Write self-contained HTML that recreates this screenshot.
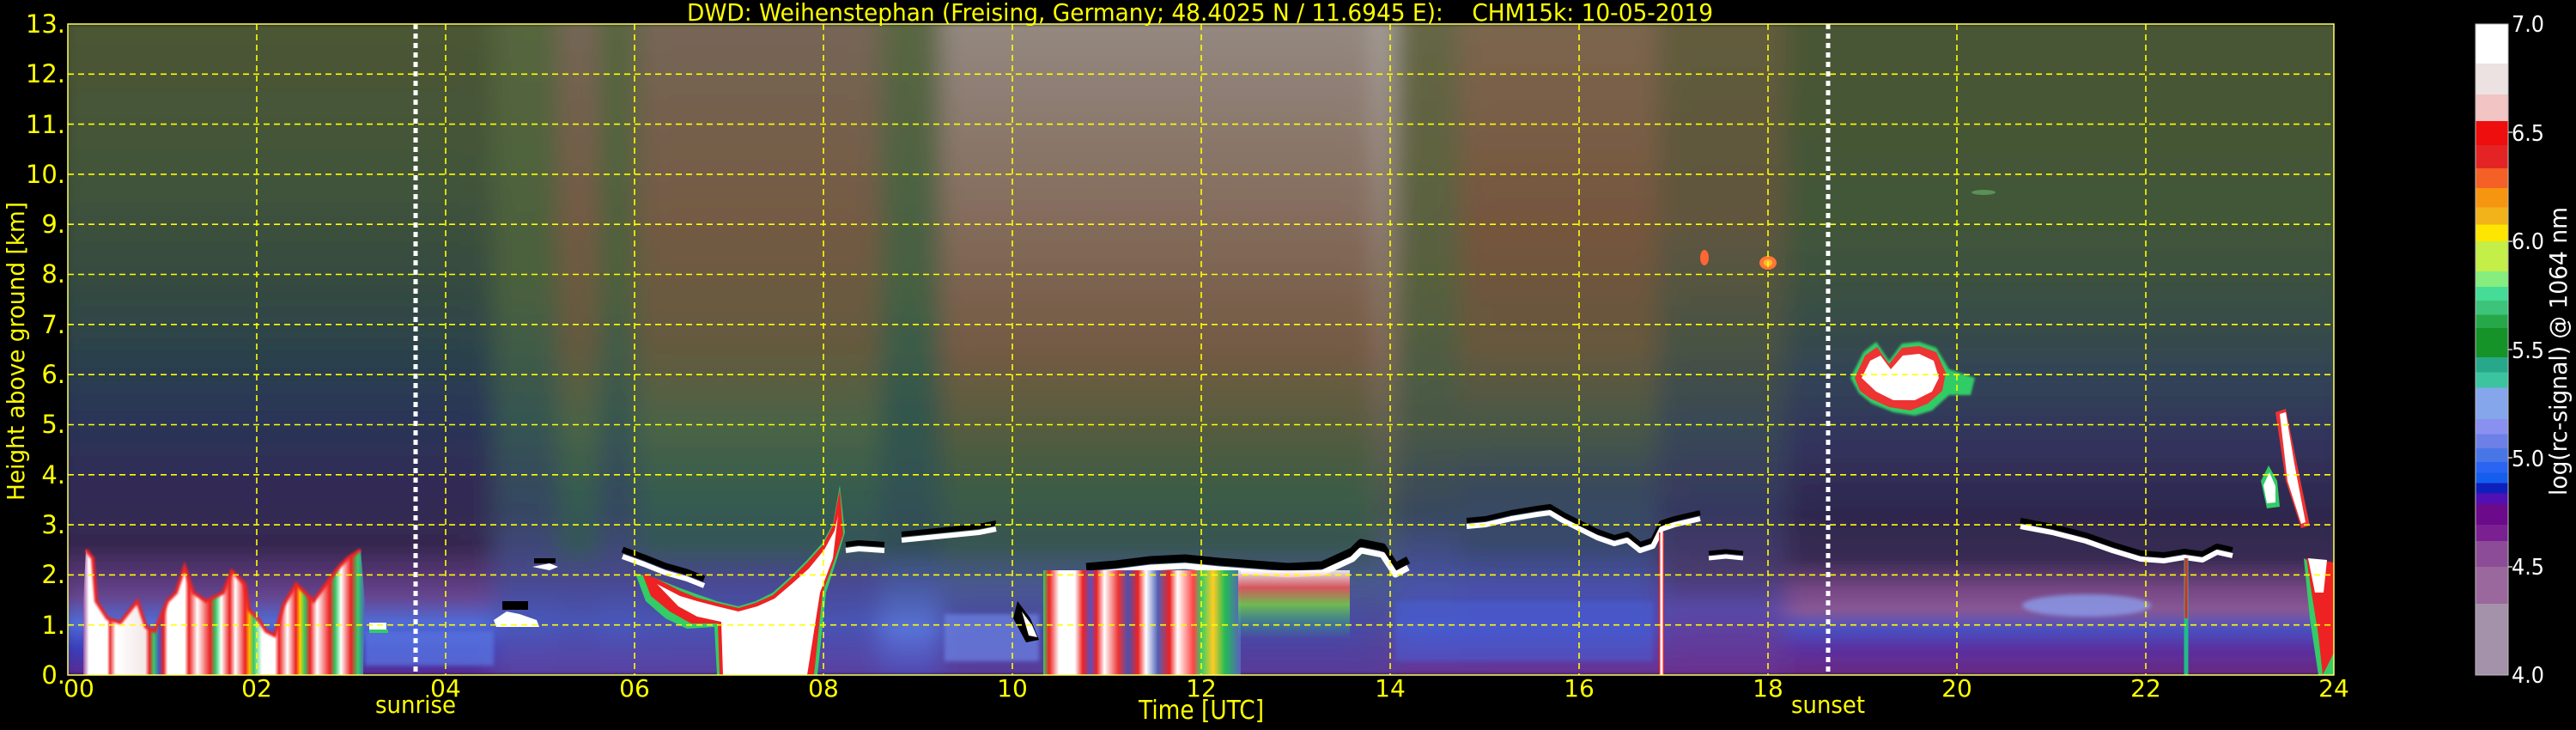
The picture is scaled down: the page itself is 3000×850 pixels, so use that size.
<!DOCTYPE html>
<html><head><meta charset="utf-8"><style>
html,body{margin:0;padding:0;background:#000;width:3000px;height:850px;overflow:hidden}
svg{display:block}
text{font-family:"DejaVu Sans","Liberation Sans",sans-serif}
</style></head><body>
<svg width="3000" height="850" viewBox="0 0 3000 850" xmlns="http://www.w3.org/2000/svg">
<defs>
<clipPath id="pc"><rect x="79" y="28" width="2639" height="758"/></clipPath>
<filter id="hb" x="-5%" y="0" width="110%" height="100%"><feGaussianBlur stdDeviation="14 2" edgeMode="duplicate"/></filter>
<filter id="sb"><feGaussianBlur stdDeviation="2.5"/></filter>
<filter id="sb1"><feGaussianBlur stdDeviation="1.2"/></filter>
<linearGradient id="gA" x1="0" y1="0" x2="0" y2="1">
<stop offset="0" stop-color="#4c5634"/><stop offset="0.23" stop-color="#42543a"/><stop offset="0.385" stop-color="#364c40"/><stop offset="0.5" stop-color="#2c424a"/><stop offset="0.6" stop-color="#2a3658"/><stop offset="0.7" stop-color="#302c56"/><stop offset="0.8" stop-color="#362850"/><stop offset="0.846" stop-color="#563674"/><stop offset="0.88" stop-color="#664690"/><stop offset="0.92" stop-color="#506cd8"/><stop offset="0.96" stop-color="#3a3ebc"/><stop offset="1" stop-color="#5a2a90"/></linearGradient>
<linearGradient id="gB1" x1="0" y1="0" x2="0" y2="1">
<stop offset="0" stop-color="#56663e"/><stop offset="0.4" stop-color="#4a603e"/><stop offset="0.6" stop-color="#365650"/><stop offset="0.75" stop-color="#364662"/><stop offset="0.85" stop-color="#48488e"/><stop offset="0.92" stop-color="#4858bc"/><stop offset="1" stop-color="#5a40a0"/></linearGradient>
<linearGradient id="gB" x1="0" y1="0" x2="0" y2="1">
<stop offset="0" stop-color="#766656"/><stop offset="0.3" stop-color="#745a44"/><stop offset="0.5" stop-color="#645a3e"/><stop offset="0.62" stop-color="#4a6446"/><stop offset="0.72" stop-color="#365c4e"/><stop offset="0.8" stop-color="#365658"/><stop offset="0.85" stop-color="#48488e"/><stop offset="0.92" stop-color="#4854b4"/><stop offset="1" stop-color="#5a40a0"/></linearGradient>
<linearGradient id="gC" x1="0" y1="0" x2="0" y2="1">
<stop offset="0" stop-color="#5a6642"/><stop offset="0.4" stop-color="#466042"/><stop offset="0.6" stop-color="#32564c"/><stop offset="0.8" stop-color="#324e58"/><stop offset="0.86" stop-color="#4858a0"/><stop offset="0.93" stop-color="#5872d6"/><stop offset="1" stop-color="#5048b0"/></linearGradient>
<linearGradient id="gD" x1="0" y1="0" x2="0" y2="1">
<stop offset="0" stop-color="#948880"/><stop offset="0.3" stop-color="#846c5c"/><stop offset="0.5" stop-color="#745a44"/><stop offset="0.62" stop-color="#565c3e"/><stop offset="0.72" stop-color="#3c5c46"/><stop offset="0.8" stop-color="#385652"/><stop offset="0.86" stop-color="#48588e"/><stop offset="0.93" stop-color="#4848a6"/><stop offset="1" stop-color="#5a3a98"/></linearGradient>
<linearGradient id="gW" x1="0" y1="0" x2="0" y2="1">
<stop offset="0" stop-color="#aaa29e"/><stop offset="0.5" stop-color="#846c5c"/><stop offset="0.75" stop-color="#48584e"/><stop offset="0.86" stop-color="#48588e"/><stop offset="1" stop-color="#5a3a98"/></linearGradient>
<linearGradient id="gE1" x1="0" y1="0" x2="0" y2="1">
<stop offset="0" stop-color="#666644"/><stop offset="0.4" stop-color="#56603e"/><stop offset="0.62" stop-color="#485846"/><stop offset="0.75" stop-color="#38485e"/><stop offset="0.86" stop-color="#4852a6"/><stop offset="0.93" stop-color="#4854c2"/><stop offset="1" stop-color="#6a3090"/></linearGradient>
<linearGradient id="gE" x1="0" y1="0" x2="0" y2="1">
<stop offset="0" stop-color="#7c664e"/><stop offset="0.3" stop-color="#76563e"/><stop offset="0.5" stop-color="#66583e"/><stop offset="0.62" stop-color="#485846"/><stop offset="0.72" stop-color="#38485e"/><stop offset="0.8" stop-color="#38486e"/><stop offset="0.86" stop-color="#4850a6"/><stop offset="0.93" stop-color="#4850c2"/><stop offset="1" stop-color="#6a3090"/></linearGradient>
<linearGradient id="gE2" x1="0" y1="0" x2="0" y2="1">
<stop offset="0" stop-color="#625c3e"/><stop offset="0.3" stop-color="#60563e"/><stop offset="0.5" stop-color="#485244"/><stop offset="0.62" stop-color="#384856"/><stop offset="0.75" stop-color="#363860"/><stop offset="0.84" stop-color="#483a6e"/><stop offset="0.9" stop-color="#5848a6"/><stop offset="1" stop-color="#6a3090"/></linearGradient>
<linearGradient id="gF" x1="0" y1="0" x2="0" y2="1">
<stop offset="0" stop-color="#4a5634"/><stop offset="0.3" stop-color="#425638"/><stop offset="0.45" stop-color="#384e46"/><stop offset="0.55" stop-color="#324258"/><stop offset="0.65" stop-color="#32325c"/><stop offset="0.75" stop-color="#2e284e"/><stop offset="0.82" stop-color="#382a52"/><stop offset="0.87" stop-color="#784886"/><stop offset="0.9" stop-color="#885896"/><stop offset="0.93" stop-color="#4a50c0"/><stop offset="0.96" stop-color="#5a30a0"/><stop offset="1" stop-color="#6a2a80"/></linearGradient>
<linearGradient id="gL" gradientUnits="userSpaceOnUse" x1="97" y1="0" x2="425" y2="0">
<stop offset="0" stop-color="#9a50a0"/><stop offset="0.02" stop-color="#fff"/><stop offset="0.085" stop-color="#fff"/><stop offset="0.095" stop-color="#e33"/><stop offset="0.115" stop-color="#fff"/><stop offset="0.22" stop-color="#f4e8e8"/><stop offset="0.235" stop-color="#e22"/><stop offset="0.25" stop-color="#3c6"/><stop offset="0.27" stop-color="#5050c0"/><stop offset="0.285" stop-color="#e22"/><stop offset="0.3" stop-color="#fff"/><stop offset="0.36" stop-color="#fff"/><stop offset="0.375" stop-color="#e22"/><stop offset="0.405" stop-color="#fff"/><stop offset="0.45" stop-color="#e22"/><stop offset="0.47" stop-color="#3c6"/><stop offset="0.49" stop-color="#fff"/><stop offset="0.52" stop-color="#e22"/><stop offset="0.54" stop-color="#fff"/><stop offset="0.575" stop-color="#e22"/><stop offset="0.59" stop-color="#fb0"/><stop offset="0.605" stop-color="#3c6"/><stop offset="0.635" stop-color="#fff"/><stop offset="0.68" stop-color="#fff"/><stop offset="0.695" stop-color="#e22"/><stop offset="0.725" stop-color="#fff"/><stop offset="0.755" stop-color="#e22"/><stop offset="0.77" stop-color="#fc0"/><stop offset="0.785" stop-color="#3c6"/><stop offset="0.805" stop-color="#e22"/><stop offset="0.83" stop-color="#fff"/><stop offset="0.875" stop-color="#e22"/><stop offset="0.895" stop-color="#3c6"/><stop offset="0.915" stop-color="#fff"/><stop offset="0.95" stop-color="#e22"/><stop offset="0.975" stop-color="#3c6"/><stop offset="1" stop-color="#5060c0"/></linearGradient>
<linearGradient id="gM" gradientUnits="userSpaceOnUse" x1="1215" y1="0" x2="1445" y2="0">
<stop offset="0" stop-color="#3c6"/><stop offset="0.03" stop-color="#e22"/><stop offset="0.08" stop-color="#fff"/><stop offset="0.16" stop-color="#fff"/><stop offset="0.2" stop-color="#e22"/><stop offset="0.24" stop-color="#5a50c0"/><stop offset="0.27" stop-color="#e22"/><stop offset="0.31" stop-color="#fff"/><stop offset="0.38" stop-color="#e33"/><stop offset="0.43" stop-color="#4a50b0"/><stop offset="0.48" stop-color="#e22"/><stop offset="0.52" stop-color="#fff"/><stop offset="0.58" stop-color="#5060b8"/><stop offset="0.64" stop-color="#e22"/><stop offset="0.68" stop-color="#fff"/><stop offset="0.76" stop-color="#f44"/><stop offset="0.8" stop-color="#3c6"/><stop offset="0.86" stop-color="#fc2"/><stop offset="0.92" stop-color="#2b5"/><stop offset="1" stop-color="#5a60c0"/></linearGradient>
<linearGradient id="gTop" x1="0" y1="0" x2="0" y2="1">
<stop offset="0" stop-color="#fff"/><stop offset="0.25" stop-color="#e55"/><stop offset="0.5" stop-color="#7c4"/><stop offset="0.8" stop-color="#3a8" stop-opacity="0.5"/><stop offset="1" stop-color="#3a8" stop-opacity="0"/></linearGradient>
<linearGradient id="cb" x1="0" y1="0" x2="0" y2="1">
<stop offset="0" stop-color="#ffffff"/><stop offset="0.0608" stop-color="#ffffff"/>
<stop offset="0.0608" stop-color="#ece2e2"/><stop offset="0.108" stop-color="#ece2e2"/>
<stop offset="0.108" stop-color="#f2c4c4"/><stop offset="0.1488" stop-color="#f2c4c4"/>
<stop offset="0.1488" stop-color="#ee0e0e"/><stop offset="0.186" stop-color="#ee0e0e"/>
<stop offset="0.186" stop-color="#e42424"/><stop offset="0.2217" stop-color="#e42424"/>
<stop offset="0.2217" stop-color="#f46026"/><stop offset="0.2518" stop-color="#f46026"/>
<stop offset="0.2518" stop-color="#f69610"/><stop offset="0.2818" stop-color="#f69610"/>
<stop offset="0.2818" stop-color="#f2b21a"/><stop offset="0.3083" stop-color="#f2b21a"/>
<stop offset="0.3083" stop-color="#fee600"/><stop offset="0.334" stop-color="#fee600"/>
<stop offset="0.334" stop-color="#c4ee48"/><stop offset="0.3798" stop-color="#c4ee48"/>
<stop offset="0.3798" stop-color="#86ee7e"/><stop offset="0.4034" stop-color="#86ee7e"/>
<stop offset="0.4034" stop-color="#44dc96"/><stop offset="0.4249" stop-color="#44dc96"/>
<stop offset="0.4249" stop-color="#3ec47a"/><stop offset="0.4464" stop-color="#3ec47a"/>
<stop offset="0.4464" stop-color="#26a84a"/><stop offset="0.4671" stop-color="#26a84a"/>
<stop offset="0.4671" stop-color="#159228"/><stop offset="0.5122" stop-color="#159228"/>
<stop offset="0.5122" stop-color="#28a88a"/><stop offset="0.535" stop-color="#28a88a"/>
<stop offset="0.535" stop-color="#3cc4a0"/><stop offset="0.5587" stop-color="#3cc4a0"/>
<stop offset="0.5587" stop-color="#86a6ec"/><stop offset="0.6066" stop-color="#86a6ec"/>
<stop offset="0.6066" stop-color="#8a90f0"/><stop offset="0.6302" stop-color="#8a90f0"/>
<stop offset="0.6302" stop-color="#6c80e8"/><stop offset="0.6516" stop-color="#6c80e8"/>
<stop offset="0.6516" stop-color="#4876e6"/><stop offset="0.6731" stop-color="#4876e6"/>
<stop offset="0.6731" stop-color="#2a64f2"/><stop offset="0.6896" stop-color="#2a64f2"/>
<stop offset="0.6896" stop-color="#145eee"/><stop offset="0.7053" stop-color="#145eee"/>
<stop offset="0.7053" stop-color="#0e20bc"/><stop offset="0.721" stop-color="#0e20bc"/>
<stop offset="0.721" stop-color="#5010b4"/><stop offset="0.7368" stop-color="#5010b4"/>
<stop offset="0.7368" stop-color="#6c0a8c"/><stop offset="0.769" stop-color="#6c0a8c"/>
<stop offset="0.769" stop-color="#7a2090"/><stop offset="0.794" stop-color="#7a2090"/>
<stop offset="0.794" stop-color="#8c4c98"/><stop offset="0.834" stop-color="#8c4c98"/>
<stop offset="0.834" stop-color="#9a689c"/><stop offset="0.8906" stop-color="#9a689c"/>
<stop offset="0.8906" stop-color="#a492aa"/><stop offset="1" stop-color="#a492aa"/>
</linearGradient>
</defs>

<g clip-path="url(#pc)">
<g filter="url(#hb)">
<rect x="60" y="28" width="516" height="758" fill="url(#gA)"/>
<rect x="574" y="28" width="78" height="758" fill="url(#gB1)"/>
<rect x="650" y="28" width="50" height="758" fill="url(#gB)"/>
<rect x="698" y="28" width="45" height="758" fill="url(#gB1)"/>
<rect x="741" y="28" width="286" height="758" fill="url(#gB)"/>
<rect x="1025" y="28" width="72" height="758" fill="url(#gC)"/>
<rect x="1095" y="28" width="507" height="758" fill="url(#gD)"/>
<rect x="1600" y="28" width="25" height="758" fill="url(#gW)"/>
<rect x="1625" y="28" width="77" height="758" fill="url(#gE1)"/>
<rect x="1700" y="28" width="232" height="758" fill="url(#gE)"/>
<rect x="1930" y="28" width="152" height="758" fill="url(#gE2)"/>
<rect x="2080" y="28" width="660" height="758" fill="url(#gF)"/>
</g>
<g filter="url(#sb)" opacity="0.75">
<rect x="425" y="735" width="150" height="40" fill="#5a74e0"/>
<rect x="1100" y="715" width="110" height="55" fill="#6a80e0"/>
<ellipse cx="2430" cy="705" rx="75" ry="13" fill="#8aa0f0"/>
<rect x="1625" y="700" width="300" height="70" fill="#4a62d8" opacity="0.6"/>
</g>

<path d="M97,786 L97,700 L100,640 L108,650 L112,700 L125,720 L140,725 L160,700 L170,730 L180,735 L195,700 L205,690 L215,660 L225,690 L240,700 L260,690 L270,665 L285,680 L290,710 L300,720 L310,735 L320,740 L330,705 L345,680 L355,690 L365,700 L380,680 L395,660 L405,650 L420,640 L425,700 L423,786 Z" fill="url(#gL)"/>
<path d="M100,640 L108,650 L112,700 L125,720 L140,725 L160,700 L170,730 L180,735 L195,700 L205,690 L215,660 L225,690 L240,700 L260,690 L270,665 L285,680 L290,710 L300,720 L310,735 L320,740 L330,705 L345,680 L355,690 L365,700 L380,680 L395,660 L405,650 L420,640" fill="none" stroke="#e22" stroke-width="4" filter="url(#sb1)"/>
<g>
<rect x="430" y="725" width="20" height="8" fill="#fff"/><rect x="430" y="733" width="22" height="4" fill="#3c6"/>
<path d="M575,722 L590,712 L605,715 L625,722 L628,730 L578,730 Z" fill="#fff"/>
<rect x="585" y="700" width="30" height="10" fill="#000"/>
<path d="M620,660 L640,656 L650,660 L640,664 Z" fill="#fff"/><rect x="622" y="650" width="25" height="6" fill="#000"/>
</g>

<path d="M740,668 L760,672 L790,684 L812,692 L835,700 L860,706 L880,700 L900,690 L920,672 L940,652 L958,632 L970,610 L978,565 L984,620 L975,650 L962,690 L952,786 L835,786 L832,730 L800,732 L775,720 L752,700 Z" fill="#3c6"/>
<path d="M748,668 L765,674 L792,688 L812,696 L835,702 L860,708 L880,702 L900,693 L920,675 L940,655 L958,635 L970,612 L978,570 L982,622 L972,652 L958,690 L948,786 L838,786 L836,726 L805,726 L780,712 L758,694 Z" fill="#e22"/>
<path d="M765,680 L792,694 L812,700 L835,706 L860,712 L882,706 L902,697 L922,680 L942,662 L960,640 L972,618 L976,600 L970,650 L955,690 L940,786 L842,786 L840,724 L812,718 L790,706 Z" fill="#fff"/>
<g fill="none" stroke-linejoin="round">
<polyline points="725,640 750,649 775,659 800,666 820,674" stroke="#000" stroke-width="7"/>
<polyline points="725,648 750,657 775,667 800,674 820,682" stroke="#fff" stroke-width="6"/>
<polyline points="985,634 1000,632 1030,634" stroke="#000" stroke-width="6"/>
<polyline points="985,641 1000,639 1030,641" stroke="#fff" stroke-width="6"/>
<polyline points="1050,622 1080,619 1110,616 1140,613 1160,609" stroke="#000" stroke-width="6"/>
<polyline points="1050,629 1080,626 1110,623 1140,620 1160,616" stroke="#fff" stroke-width="6"/>
<polyline points="1265,660 1300,657 1340,652 1380,650 1420,654 1460,657 1500,660 1540,658 1575,642 1585,632 1610,637 1625,660 1640,652" stroke="#000" stroke-width="9"/>
<polyline points="1265,669 1300,666 1340,661 1380,659 1420,663 1460,666 1500,669 1540,667 1575,651 1585,641 1610,646 1625,669 1640,661" stroke="#fff" stroke-width="7"/>
<polyline points="1708,606 1730,604 1760,597 1790,592 1805,590 1820,599 1840,609 1860,619 1880,626 1895,622 1910,634 1925,629 1935,609 1950,604 1980,597" stroke="#000" stroke-width="6"/>
<polyline points="1708,613 1730,611 1760,604 1790,599 1805,597 1820,606 1840,616 1860,626 1880,633 1895,629 1910,641 1925,636 1935,616 1950,611 1980,604" stroke="#fff" stroke-width="6"/>
<polyline points="1990,644 2010,642 2030,644" stroke="#000" stroke-width="5"/>
<polyline points="1990,650 2010,648 2030,650" stroke="#fff" stroke-width="5"/>
<polyline points="2353,606 2390,613 2429,623 2460,634 2493,644 2520,646 2544,642 2565,645 2582,636 2600,640" stroke="#000" stroke-width="6"/>
<polyline points="2353,613 2390,620 2429,630 2460,641 2493,651 2520,653 2544,649 2565,652 2582,643 2600,647" stroke="#fff" stroke-width="6"/>
</g>
<rect x="1215" y="664" width="230" height="122" fill="url(#gM)"/>
<rect x="1442" y="664" width="130" height="80" fill="url(#gTop)" opacity="0.85"/>
<path d="M1185,700 L1200,720 L1210,745 L1195,748 L1180,720 Z" fill="#000"/>
<path d="M1190,712 L1202,728 L1208,742 L1198,740 Z" fill="#fff"/>
<line x1="1935" y1="620" x2="1935" y2="786" stroke="#e22" stroke-width="6"/>
<line x1="1935" y1="620" x2="1935" y2="786" stroke="#fff" stroke-width="3"/>
<line x1="2546" y1="650" x2="2546" y2="786" stroke="#2b8" stroke-width="5"/>
<line x1="2546" y1="650" x2="2546" y2="720" stroke="#e22" stroke-width="3"/>
<path d="M2155,440 L2170,410 L2185,398 L2200,420 L2215,400 L2235,398 L2255,405 L2270,430 L2300,440 L2295,460 L2270,460 L2250,478 L2230,484 L2205,480 L2180,470 L2165,458 Z" fill="#3c6" filter="url(#sb1)"/>
<path d="M2160,440 L2172,414 L2186,404 L2200,424 L2215,405 L2235,403 L2255,410 L2266,434 L2262,455 L2245,470 L2225,478 L2200,474 L2178,464 L2166,455 Z" fill="#e33"/>
<path d="M2168,440 L2178,420 L2190,414 L2202,430 L2216,414 L2235,412 L2252,420 L2258,440 L2250,456 L2230,466 L2205,466 L2185,456 Z" fill="#fff"/>
<ellipse cx="1985" cy="300" rx="5" ry="9" fill="#f63"/>
<ellipse cx="2059" cy="306" rx="10" ry="8" fill="#f73"/>
<ellipse cx="2059" cy="306" rx="5" ry="4" fill="#fb3"/>
<ellipse cx="2310" cy="224" rx="14" ry="3" fill="#6a6" opacity="0.7"/>
<path d="M2633,560 L2642,542 L2652,560 L2655,590 L2640,592 Z" fill="#3c6"/>
<path d="M2636,565 L2643,550 L2650,566 L2650,585 L2640,586 Z" fill="#fff"/>
<path d="M2650,480 L2662,476 L2675,540 L2690,612 L2680,615 L2662,560 Z" fill="#e33"/>
<path d="M2655,482 L2662,480 L2672,540 L2685,608 L2680,610 L2664,560 Z" fill="#fff"/>
<path d="M2683,650 L2700,660 L2718,655 L2718,786 L2700,786 L2690,720 Z" fill="#3c6"/>
<path d="M2686,650 L2718,655 L2718,760 L2705,786 L2700,740 L2692,690 Z" fill="#e22"/>
<path d="M2688,650 L2710,652 L2706,690 L2696,690 Z" fill="#fff"/>
</g>

<g stroke="#ffff00" stroke-width="1.6" stroke-dasharray="7 5" fill="none">
<line x1="79" y1="727.7" x2="2718" y2="727.7"/><line x1="79" y1="669.4" x2="2718" y2="669.4"/><line x1="79" y1="611.1" x2="2718" y2="611.1"/><line x1="79" y1="552.8" x2="2718" y2="552.8"/><line x1="79" y1="494.5" x2="2718" y2="494.5"/><line x1="79" y1="436.2" x2="2718" y2="436.2"/><line x1="79" y1="377.8" x2="2718" y2="377.8"/><line x1="79" y1="319.5" x2="2718" y2="319.5"/><line x1="79" y1="261.2" x2="2718" y2="261.2"/><line x1="79" y1="202.9" x2="2718" y2="202.9"/><line x1="79" y1="144.6" x2="2718" y2="144.6"/><line x1="79" y1="86.3" x2="2718" y2="86.3"/>
<line x1="299" y1="28" x2="299" y2="786"/><line x1="519" y1="28" x2="519" y2="786"/><line x1="739" y1="28" x2="739" y2="786"/><line x1="959" y1="28" x2="959" y2="786"/><line x1="1179" y1="28" x2="1179" y2="786"/><line x1="1399" y1="28" x2="1399" y2="786"/><line x1="1619" y1="28" x2="1619" y2="786"/><line x1="1839" y1="28" x2="1839" y2="786"/><line x1="2059" y1="28" x2="2059" y2="786"/><line x1="2279" y1="28" x2="2279" y2="786"/><line x1="2499" y1="28" x2="2499" y2="786"/>
</g>
<line x1="484" y1="28" x2="484" y2="786" stroke="#fff" stroke-width="5" stroke-dasharray="6 5"/>
<line x1="2129" y1="28" x2="2129" y2="786" stroke="#fff" stroke-width="5" stroke-dasharray="6 5"/>
<rect x="79" y="28" width="2639" height="758" fill="none" stroke="#ffff66" stroke-width="1.5"/>

<g fill="#ffff00" font-size="28">
<text x="800" y="24" textLength="1195" lengthAdjust="spacingAndGlyphs" xml:space="preserve">DWD: Weihenstephan (Freising, Germany; 48.4025 N / 11.6945 E):&#160;&#160;&#160;&#160;CHM15k: 10-05-2019</text>
</g>
<g fill="#ffff00" font-size="29" text-anchor="end">
<text x="76" y="796">0.</text><text x="76" y="738">1.</text><text x="76" y="679">2.</text><text x="76" y="621">3.</text><text x="76" y="563">4.</text><text x="76" y="504">5.</text><text x="76" y="446">6.</text><text x="76" y="388">7.</text><text x="76" y="329">8.</text><text x="76" y="271">9.</text><text x="76" y="213">10.</text><text x="76" y="155">11.</text><text x="76" y="96">12.</text><text x="76" y="38">13.</text>
</g>
<g fill="#ffff00" font-size="28" text-anchor="middle">
<text x="92" y="811">00</text><text x="299" y="811">02</text><text x="519" y="811">04</text><text x="739" y="811">06</text><text x="959" y="811">08</text><text x="1179" y="811">10</text><text x="1399" y="811">12</text><text x="1619" y="811">14</text><text x="1839" y="811">16</text><text x="2059" y="811">18</text><text x="2279" y="811">20</text><text x="2499" y="811">22</text><text x="2718" y="811">24</text>
</g>
<g fill="#ffff00" font-size="28">
<text x="437" y="830" textLength="94" lengthAdjust="spacingAndGlyphs">sunrise</text>
<text x="2086" y="830" textLength="86" lengthAdjust="spacingAndGlyphs">sunset</text>
<text x="1326" y="837" font-size="30" textLength="146" lengthAdjust="spacingAndGlyphs">Time [UTC]</text>
<text transform="translate(28,583) rotate(-90)" textLength="348" lengthAdjust="spacingAndGlyphs">Height above ground [km]</text>
</g>

<rect x="2883" y="28" width="38" height="758" fill="url(#cb)" stroke="#bbb" stroke-width="1"/>
<g stroke="#ccc" stroke-width="1.5">
<line x1="2921" y1="154" x2="2926" y2="154"/><line x1="2921" y1="281" x2="2926" y2="281"/><line x1="2921" y1="407" x2="2926" y2="407"/><line x1="2921" y1="533" x2="2926" y2="533"/><line x1="2921" y1="660" x2="2926" y2="660"/>
</g>
<g fill="#fff" font-size="26">
<text x="2925" y="37" textLength="38" lengthAdjust="spacingAndGlyphs">7.0</text>
<text x="2925" y="164" textLength="38" lengthAdjust="spacingAndGlyphs">6.5</text>
<text x="2925" y="290" textLength="38" lengthAdjust="spacingAndGlyphs">6.0</text>
<text x="2925" y="417" textLength="38" lengthAdjust="spacingAndGlyphs">5.5</text>
<text x="2925" y="543" textLength="38" lengthAdjust="spacingAndGlyphs">5.0</text>
<text x="2925" y="669" textLength="38" lengthAdjust="spacingAndGlyphs">4.5</text>
<text x="2925" y="795" textLength="38" lengthAdjust="spacingAndGlyphs">4.0</text>
<text transform="translate(2989,577) rotate(-90)" font-size="28" textLength="336" lengthAdjust="spacingAndGlyphs">log(rc-signal) @ 1064 nm</text>
</g>
</svg>
</body></html>
